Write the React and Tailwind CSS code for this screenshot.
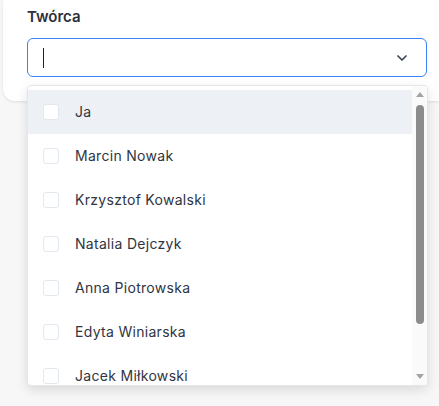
import { ChevronDown } from "lucide-react";

const people = [
    "Ja",
    "Marcin Nowak",
    "Krzysztof Kowalski",
    "Natalia Dejczyk",
    "Anna Piotrowska",
    "Edyta Winiarska",
    "Jacek Miłkowski",
];

function Arrow({ down = false }) {
    return (
        <svg width="8" height="5" viewBox="0 0 8 5" className={down ? "rotate-180" : ""}>
            <path d="M4 0 L8 5 L0 5 Z" fill="#a3a3a3" />
        </svg>
    );
}

export default function App() {
    return (
        <div className="relative min-h-screen bg-[#f7f7f7] font-['Inter',sans-serif] text-[#2f3542]">
            <div className="ml-[3px] h-[101px] rounded-bl-xl bg-white pl-6 pr-3 pt-[6px] shadow-[0_1px_3px_rgba(0,0,0,0.1)]">
                <div className="text-[15px] font-semibold leading-[22px] text-[#2b2f3a]">Twórca</div>
                <div className="mt-[10px] flex h-[39px] w-[400px] items-center justify-between rounded-md border-[1.5px] border-[#3b82f6] bg-white pl-[15px] pr-4">
                    <span className="h-5 w-px bg-[#222]" />
                    <ChevronDown size={16} strokeWidth={2.5} className="text-[#374151]" />
                </div>
            </div>

            <div className="absolute left-[27px] top-[85px] flex h-[301px] w-[401px] overflow-hidden rounded-sm border border-[#e6e6e6] bg-white shadow-[0_4px_12px_rgba(0,0,0,0.12)]">
                <div className="h-full flex-1 overflow-hidden pt-[4px]">
                    {people.map((name, i) => (
                        <div
                            key={name}
                            className={`flex h-11 items-center gap-4 pl-[15px] text-[14px] tracking-[0.3px] ${i === 0 ? "bg-[#edf1f5]" : ""}`}
                        >
                            <span className="h-4 w-4 rounded-[3px] border border-[#e2e8f0] bg-white" />
                            <span className="-mt-px">{name}</span>
                        </div>
                    ))}
                </div>
                <div className="flex w-[15px] flex-col items-center bg-[#fafafa] py-[6px]">
                    <Arrow />
                    <div className="mt-[8px] h-[219px] w-2 rounded-full bg-[#8c8c8c]" />
                    <div className="flex-1" />
                    <Arrow down />
                </div>
            </div>
        </div>
    );
}
